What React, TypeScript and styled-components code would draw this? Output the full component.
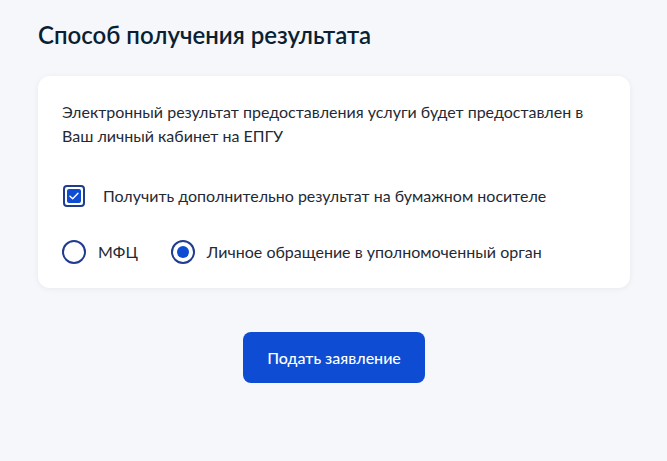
import React, { useState } from "react";
import styled, { createGlobalStyle } from "styled-components";

const GlobalStyle = createGlobalStyle`
  html, body {
    margin: 0;
    padding: 0;
    background: #f5f7fa;
  }
  body {
    font-family: Lato, "Noto Sans", sans-serif;
    color: #0b1f33;
  }
`;

const Page = styled.div`
  width: 667px;
  min-height: 461px;
  box-sizing: border-box;
  padding: 19px 37px 0 38px;
  display: flex;
  flex-direction: column;
`;

const Title = styled.h2`
  margin: 0;
  font-size: 24px;
  line-height: 32px;
  font-weight: 600;
  color: #0b1f33;
`;

const Card = styled.section`
  margin-top: 25px;
  background: #ffffff;
  border-radius: 12px;
  box-shadow: 0 1px 6px rgba(11, 31, 51, 0.06);
  padding: 24px;
  display: flex;
  flex-direction: column;
`;

const Text = styled.p`
  margin: 0;
  font-size: 16px;
  line-height: 24px;
  color: #1f2a36;
  padding-right: 20px;
`;

const Row = styled.div<{ $top: number }>`
  margin-top: ${(p) => p.$top}px;
  display: flex;
  align-items: center;
  height: 24px;
`;

const Option = styled.label<{ $gap: number }>`
  display: flex;
  align-items: center;
  gap: ${(p) => p.$gap}px;
  font-size: 16px;
  line-height: 24px;
  color: #1f2a36;
  cursor: pointer;
  & + & {
    margin-left: 33px;
  }
`;

const Box = styled.span`
  width: 22px;
  height: 22px;
  margin-left: 1px;
  box-sizing: border-box;
  border: 2px solid #1f3c8e;
  border-radius: 4px;
  padding: 2px;
  display: flex;
  flex-shrink: 0;
`;

const BoxFill = styled.span`
  flex: 1;
  border-radius: 2px;
  background: #0d4cd3;
  display: flex;
  align-items: center;
  justify-content: center;
`;

const Radio = styled.span<{ $checked: boolean }>`
  width: 24px;
  height: 24px;
  box-sizing: border-box;
  border: 2px solid #1f3c8e;
  border-radius: 50%;
  display: flex;
  align-items: center;
  justify-content: center;
  flex-shrink: 0;
  &::after {
    content: "";
    width: 12px;
    height: 12px;
    border-radius: 50%;
    background: ${(p) => (p.$checked ? "#0d4cd3" : "transparent")};
  }
`;

const Actions = styled.div`
  display: flex;
  justify-content: center;
  margin-top: 44px;
`;

const Button = styled.button`
  width: 182px;
  height: 51px;
  border: none;
  border-radius: 8px;
  background: #0d4cd3;
  color: #ffffff;
  font-family: Lato, "Noto Sans", sans-serif;
  font-size: 16px;
  font-weight: 500;
  cursor: pointer;
`;

export default function App() {
  const [paper, setPaper] = useState(true);
  const [place, setPlace] = useState<"mfc" | "org">("org");

  return (
    <>
      <GlobalStyle />
      <Page>
        <Title>Способ получения результата</Title>
        <Card>
          <Text>
            Электронный результат предоставления услуги будет предоставлен в Ваш личный
            кабинет на ЕПГУ
          </Text>
          <Row $top={36}>
            <Option $gap={18} onClick={() => setPaper(!paper)}>
              <Box>
                {paper && (
                  <BoxFill>
                    <svg width="10" height="8" viewBox="0 0 10 8" fill="none">
                      <path
                        d="M1 4.2L3.7 6.8L9 1.2"
                        stroke="#ffffff"
                        strokeWidth="1.4"
                        strokeLinecap="round"
                        strokeLinejoin="round"
                      />
                    </svg>
                  </BoxFill>
                )}
              </Box>
              Получить дополнительно результат на бумажном носителе
            </Option>
          </Row>
          <Row $top={32}>
            <Option $gap={12} onClick={() => setPlace("mfc")}>
              <Radio $checked={place === "mfc"} />
              МФЦ
            </Option>
            <Option $gap={12} onClick={() => setPlace("org")}>
              <Radio $checked={place === "org"} />
              Личное обращение в уполномоченный орган
            </Option>
          </Row>
        </Card>
        <Actions>
          <Button>Подать заявление</Button>
        </Actions>
      </Page>
    </>
  );
}
